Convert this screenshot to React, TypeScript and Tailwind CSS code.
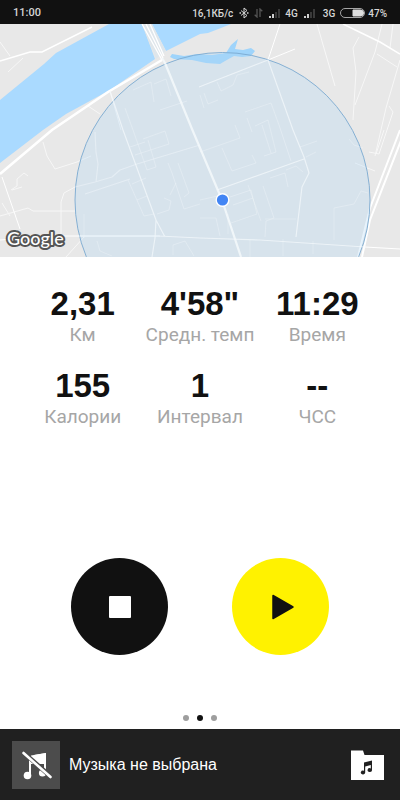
interface Stat {
  value: string;
  label: string;
}

const stats: Stat[] = [
  { value: '2,31', label: 'Км' },
  { value: '4\'58"', label: 'Средн. темп' },
  { value: '11:29', label: 'Время' },
  { value: '155', label: 'Калории' },
  { value: '1', label: 'Интервал' },
  { value: '--', label: 'ЧСС' },
];

function SignalIcon() {
  return (
    <svg viewBox="0 0 12 9" className="h-[9px] w-3" aria-hidden="true">
      <path d="M0 7h2v2H0zM3 5h2v4H3z" fill="#d0d0d0" />
      <path d="M6 3h2v6H6zM9 0h2v9H9z" fill="#3a3a3a" />
    </svg>
  );
}

function StatusBar() {
  return (
    <header className="flex h-6 items-center justify-between bg-[#111] px-[13px] pt-[2px] font-['Roboto',sans-serif] text-[11px] font-medium text-[#d6d6d6]">
      <span>11:00</span>
      <div className="flex items-center text-[10px]">
        <span>16,1КБ/с</span>
        <svg viewBox="0 0 10 12" className="ml-[6px] h-3 w-[10px]" fill="none" stroke="#d6d6d6" aria-hidden="true">
          <path d="M2 3.5l6 5L5 11V1l3 2.5-6 5" />
          <path d="M0.5 6h1.5M8 6h1.5" strokeWidth="1.4" />
        </svg>
        <svg viewBox="0 0 9 10" className="ml-[5px] h-[10px] w-[9px]" fill="none" stroke="#555" strokeWidth="1.3" aria-hidden="true">
          <path d="M3 1v8L0.7 6.7M6 9V1l2.3 2.3" />
        </svg>
        <span className="ml-[6px] flex">
          <SignalIcon />
        </span>
        <span className="ml-1">4G</span>
        <span className="ml-[6px] flex">
          <SignalIcon />
        </span>
        <span className="ml-[7px]">3G</span>
        <svg viewBox="0 0 25 10" className="ml-[5px] h-[10px] w-[25px]" aria-hidden="true">
          <rect x="0.5" y="0.5" width="24" height="9" rx="4.5" fill="none" stroke="#a5a5a5" />
          <path d="M13 2h7.500a3 3 0 0 1 0 6H13z" fill="#dedede" stroke="#dedede" />
        </svg>
        <span className="ml-[3px]">47%</span>
      </div>
    </header>
  );
}

function RouteMap() {
  return (
    <section aria-label="Карта">
      <svg viewBox="0 24 400 233" className="block w-full">
        <rect y="24" width="400" height="233" fill="#e8e8e8" />

        {/* river */}
        <path d="M109 24L56 53 44 64 0 100V163L43 130 66 114 110 90 155 59 142 24ZM152 24l14 27 34-17 8-1 13-5 10-4Z" fill="#aadaff" />
        <path d="M142 24l14 35 10-8-14-27Z" fill="#dfe6eb" />
        <path d="M170 57l2-3 12 2 14-2 14 1 14-2 5-8 7-6-3 10 8 1 8-2 4 3-4 5-9 1-8-1-9 5-5 3-14-1-14-3-18-1Z" fill="#9fd4fb" />

        {/* minor streets */}
        <g fill="none" stroke="#f7f7f7" strokeWidth="1">
          <path d="M0 42l10 14M8 72l15-14M88 106l12 8M110 91l11 39M317 24l18 62M359 37l-6 11 3 24-3 48M382 24l-7 28-20 53M377 54l20 13M393 24l-3 24M400 60l-14 48-11 48M389 106l4 6-14 42-10-2M384 130l-8 24M355 163l20 8" />
          <path d="M0 216l28-8 5 3h42M2 203l8 13M22 187l-10 3M11 190l6-4 0-7 7-6 4 3" />
          <path d="M43 142l4 14 8 13 22-7 14-6M61 238v-36l3-9 11-6M66 257l18-20" />
        </g>

        {/* main roads */}
        <g fill="none" stroke="#fff">
          <path d="M0 61l30-9h12l50-25" strokeWidth="1.5" />
          <path d="M0 174l52-44 56-38 54-32" strokeWidth="2.500" />
          <path d="M142 24l20 36M146 24l17 34M150 24l14 32" strokeWidth="1.300" />
          <path d="M343 24l37 18 20 12" strokeWidth="1.500" />
          <path d="M400 130l-30 78-12 49M402 138l-32 82-8 37" strokeWidth="2" />
          <path d="M280 24l-12 36 27-11" strokeWidth="1" />
          <path d="M0 240l50-4h110M365 247l35 2M2 177l18 52" strokeWidth="1" />
        </g>

        {/* accuracy radius */}
        <circle cx="222.500" cy="200" r="147.500" fill="#aed7f5" fillOpacity="0.3" stroke="#7aa9d0" strokeWidth="0.900" />
        <g fill="none" stroke="#f5f9fc" strokeLinejoin="round">
          <path d="M162 58l3 5 27 66 30 71 19 57" strokeWidth="2.200" strokeOpacity="0.85" />
          <path d="M199 87l69-27 25 70 11 27 5 16-7 14-6 50M217 190l87-31M110 91l13 39 33 90-1 18-3 19M156 220l9 17M78 236h80l42 2 60 2 105 7" strokeWidth="1.200" strokeOpacity="0.7" />
          <path d="M75 187l20-5 17-5 8-7 17-6 63-19M95 132l1 20 2 12-2 18M85 194l45-15" strokeWidth="1.200" strokeOpacity="0.45" />
          <g strokeOpacity="0.32">
            <path d="M133 90l18-8 3 20M154 84l12-5 5 17M125 108l8 22 14 40 9-3-8-27M130 147l15-5M135 155l34-11-4-13-22 8M160 110l27-9M168 163l4 10 12 36 16-5M178 163l11 30-5 4M128 180l16 36 10-2M132 184l14-6M137 200l10-4" />
            <path d="M200 152l40-14-5-13M222 148l10 23 24-8-4-8M200 95l4 13M204 93l4 11 10-4M217 82l4 9 12-6 4-10 12-3M245 112l26-9 8 22 12 36M247 118l5 14M262 125l9 28M255 126l13-6 8 32-12 4M300 147l17-6M306 157l10-5" />
            <path d="M200 200l22-5M230 197l21-7 6 24-26 9M233 205l20-7M248 185l13 36M263 186l11 32-8 3-1 16M265 219h31M270 178l15-5 3 14M286 170l10-4 7 6M200 218h16l4 18M228 214v20M250 240v17M283 239v17M313 241v13" />
            <path d="M334 240v-32l20-4 7-13 7 2M349 139l5 6 9 3M97 241l3 10 12 5M173 255v-10l12-4 9 15M84 238v-24M164 198l7 3-2 9-12 4M170 195l6-12" />
          </g>
        </g>

        <circle cx="222.500" cy="200" r="7" fill="#fff" />
        <circle cx="222.500" cy="200" r="5.600" fill="#4285f4" />

        <text
          x="7"
          y="245"
          className="font-['Lato',sans-serif] text-[18px] font-medium"
          fill="#fff"
          stroke="#555"
          strokeWidth="4"
          strokeLinejoin="round"
          paintOrder="stroke"
        >
          Google
        </text>
      </svg>
    </section>
  );
}

function StatsGrid() {
  return (
    <dl className="grid grid-cols-3 gap-y-5 px-6 pt-7">
      {stats.map((stat) => (
        <div key={stat.label} className="flex flex-col-reverse items-center">
          <dt className="whitespace-nowrap font-['Roboto',sans-serif] text-[19px] leading-6 text-[#a6a6a6]">
            {stat.label}
          </dt>
          <dd className="font-['Liberation_Sans',Arial,sans-serif] text-[33px] leading-[38px] font-bold text-[#111]">
            {stat.value}
          </dd>
        </div>
      ))}
    </dl>
  );
}

function PlayerBar() {
  return (
    <footer className="flex h-[71px] items-center bg-[#202020] pl-3 pr-4">
      <div className="flex h-12 w-12 items-center justify-center bg-[#4c4c4c]">
        <svg viewBox="0 0 32 32" className="h-8 w-8" aria-hidden="true">
          <path d="M11 6.500L26 4v19h-2V15H11v11H9V10z" fill="#fff" />
          <circle cx="7.500" cy="26.500" r="3.800" fill="#fff" />
          <circle cx="22.500" cy="24" r="3.600" fill="#fff" />
          <path d="M0 2L4 1 33 26.500V29L31 31 2 5z" fill="#4c4c4c" />
          <path d="M14 6L26 4v13z" fill="#fff" />
          <path d="M3.500 4l27 24" stroke="#fff" strokeWidth="2.600" strokeLinecap="round" />
        </svg>
      </div>
      <p className="ml-[9px] flex-1 font-['Liberation_Sans',Arial,sans-serif] text-base text-white">Музыка не выбрана</p>
      <button type="button" aria-label="Выбрать музыку">
        <svg viewBox="0 0 33 30" className="h-[30px] w-[33px]" aria-hidden="true">
          <path d="M0 0.500h12l1.500 4.500H33v25H0z" fill="#fff" />
          <path d="M13 12.500l8-2v9.500a2.200 1.900 0 1 1-1.200-1.600V15l-5.600 1.400v6a2.200 1.900 0 1 1-1.200-1.600z" fill="#202020" />
        </svg>
      </button>
    </footer>
  );
}

export default function App() {
  return (
    <div className="flex min-h-screen flex-col bg-white">
      <StatusBar />
      <RouteMap />
      <main className="flex flex-1 flex-col">
        <StatsGrid />
        <div className="mt-auto flex justify-center gap-16 pt-8 pb-[60px]">
          <button
            type="button"
            aria-label="Стоп"
            className="flex h-[97px] w-[97px] items-center justify-center rounded-full bg-[#111]"
          >
            <span className="h-[22px] w-[22px] rounded-[1px] bg-white" />
          </button>
          <button
            type="button"
            aria-label="Старт"
            className="flex h-[97px] w-[97px] items-center justify-center rounded-full bg-[#fff200]"
          >
            <svg viewBox="0 0 22 26" className="ml-1 h-[26px] w-[22px]" aria-hidden="true">
              <path d="M1 1.500v23L21 13z" fill="#111" stroke="#111" strokeWidth="1.500" strokeLinejoin="round" />
            </svg>
          </button>
        </div>
        <div className="flex justify-center gap-2 pb-2">
          <span className="h-[6px] w-[6px] rounded-full bg-[#9e9e9e]" />
          <span className="h-[6px] w-[6px] rounded-full bg-[#111]" />
          <span className="h-[6px] w-[6px] rounded-full bg-[#9e9e9e]" />
        </div>
      </main>
      <PlayerBar />
    </div>
  );
}
